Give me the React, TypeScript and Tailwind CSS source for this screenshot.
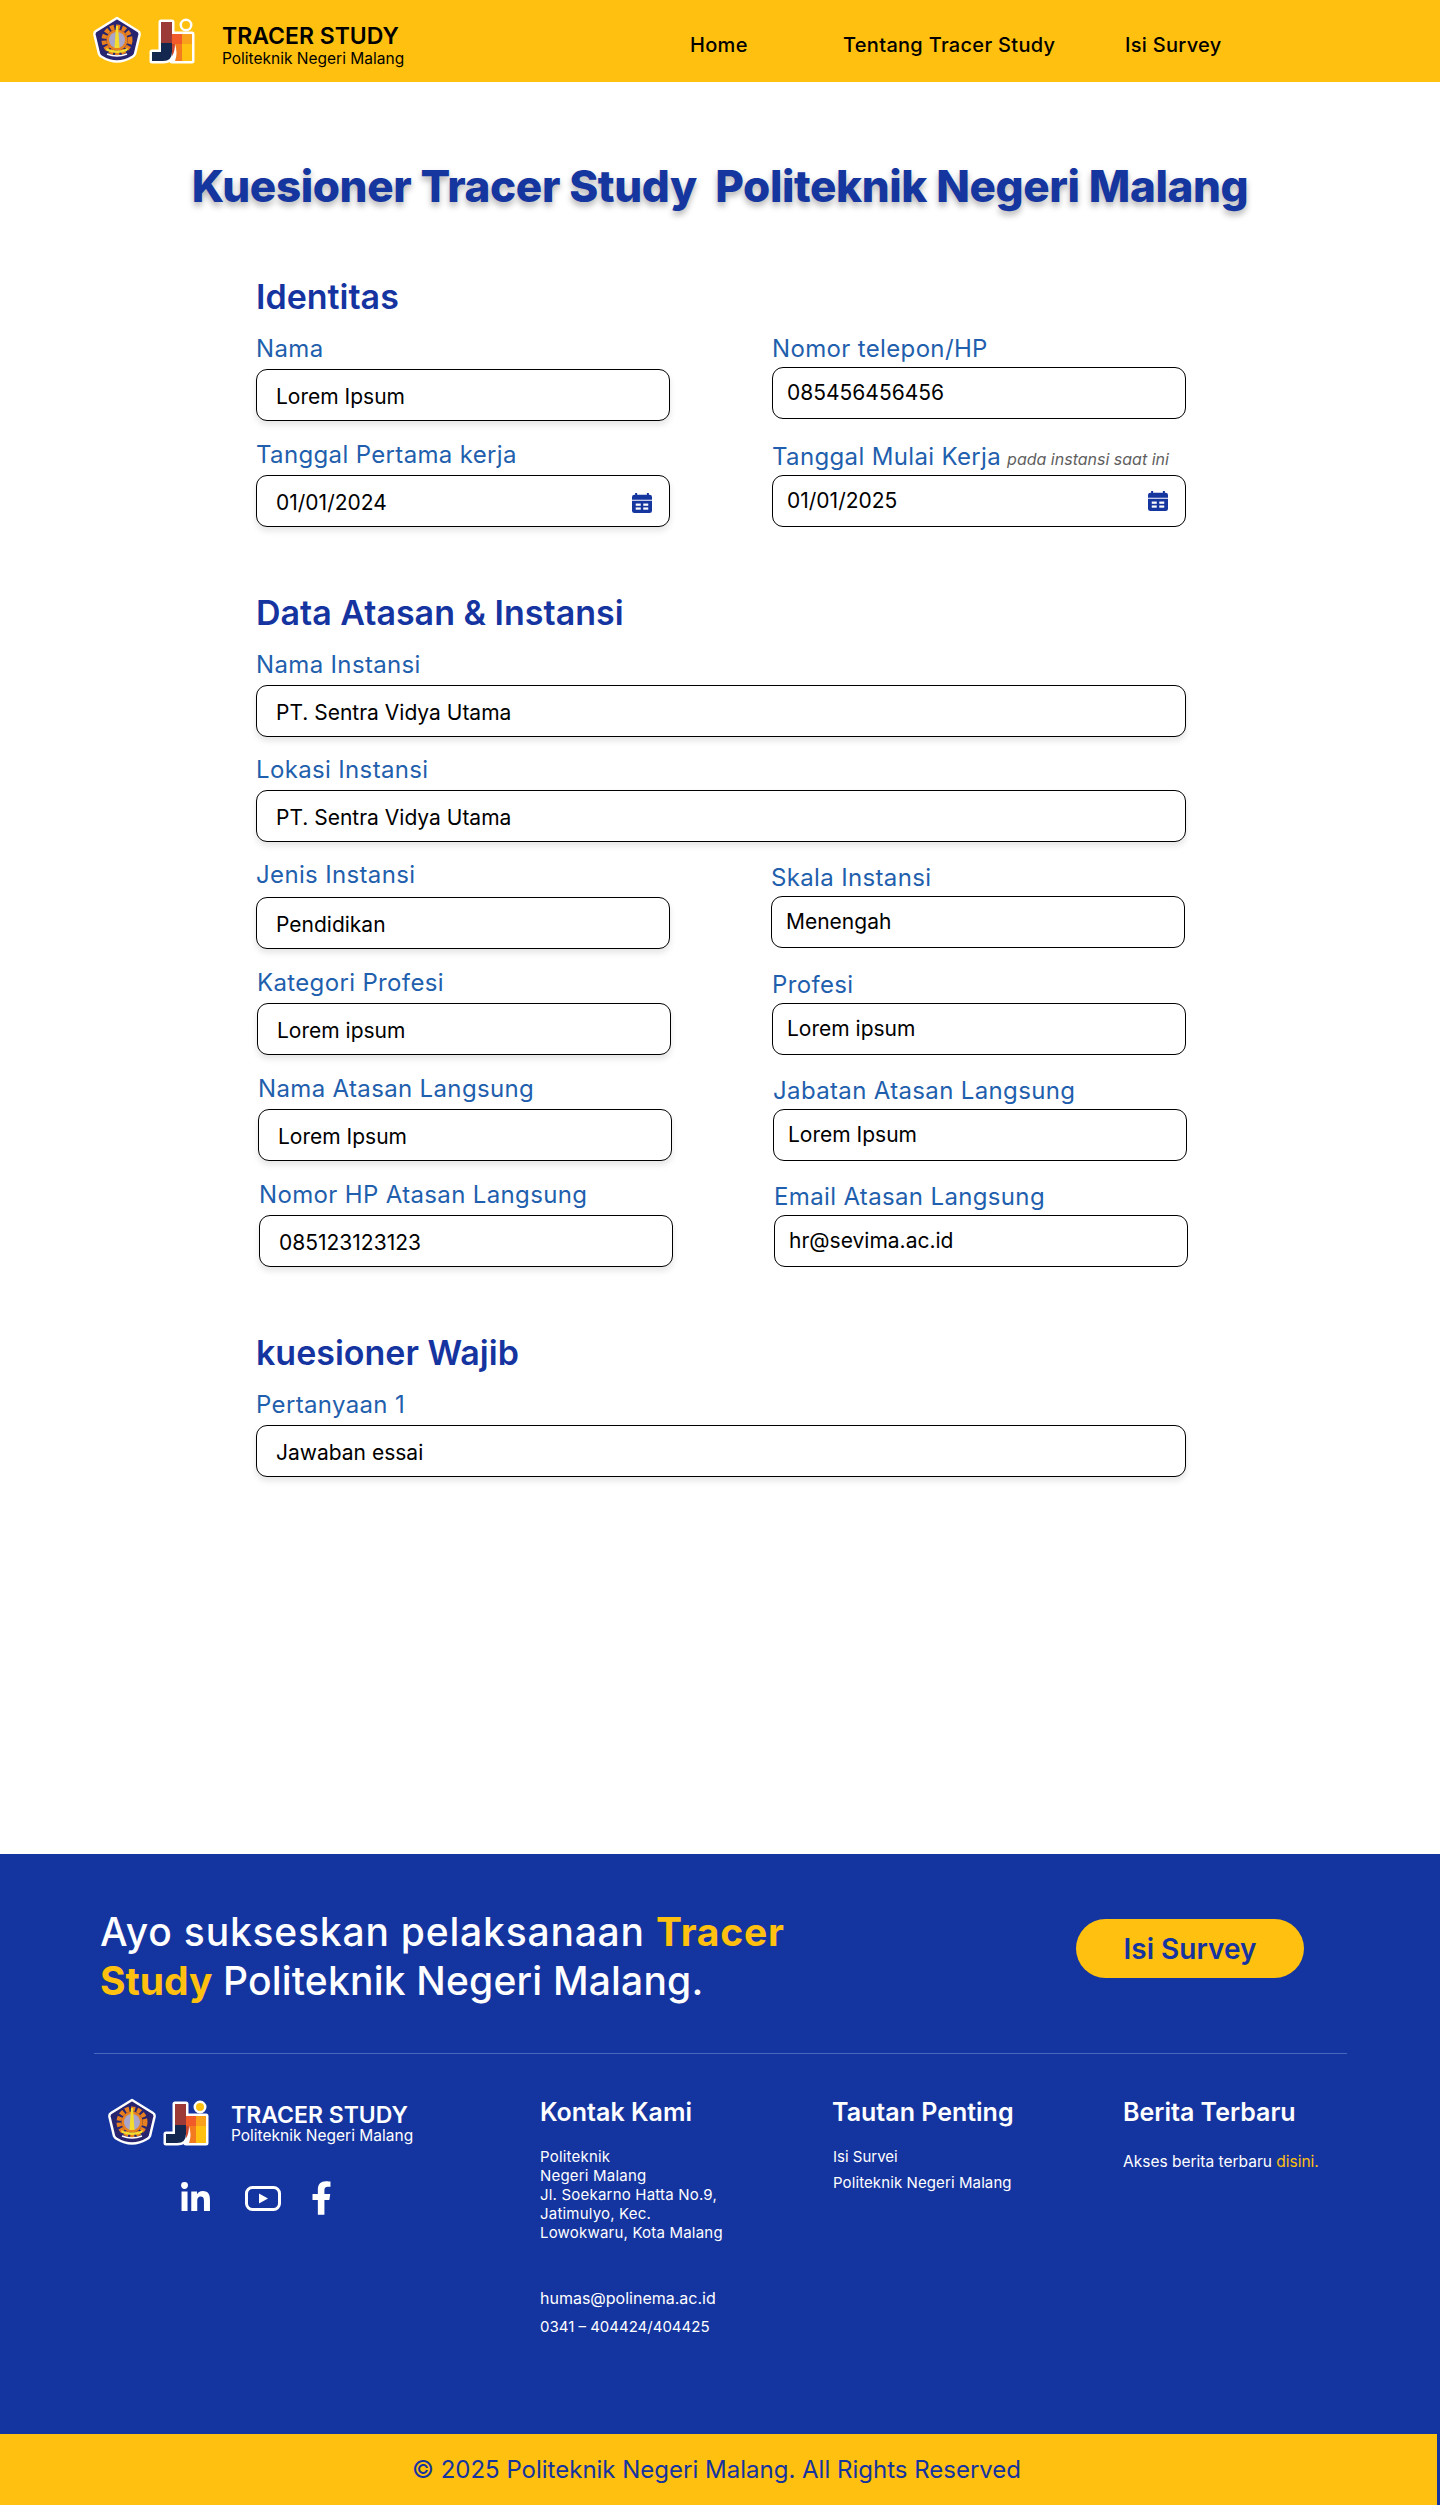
import { FaFacebookF, FaLinkedinIn } from 'react-icons/fa'

const BadgeLogo = () => (
  <svg viewBox="0 0 50 50" className="h-[50px] w-[50px] shrink-0">
    <path d="M25 2 L46 15 Q48 16 47.5 19 L43 38 Q42 40 40 41 Q25 50 10 41 Q8 40 7 38 L2.5 19 Q2 16 4 15 Z" fill="#28246f" stroke="#fff" strokeWidth="2.5" strokeLinejoin="round" />
    <circle cx="25" cy="24" r="13" fill="none" stroke="#e8801f" strokeWidth="5" strokeDasharray="4 2" />
    <circle cx="25" cy="24" r="10.5" fill="#e8801f" />
    <circle cx="25" cy="24" r="8" fill="#a9a6c9" />
    <path d="M24 10h2l1.5 22h-5z" fill="#f3dc2e" />
    <path d="M14 32q11 5 22 0l-1 3q-10 4-20 0z" fill="#f3dc2e" />
    <path d="M15 38q10 4 20 0" fill="none" stroke="#fff" strokeWidth="1.5" />
  </svg>
)

const JtiLogo = () => (
  <svg viewBox="0 0 48 46" className="h-[46px] w-[48px] shrink-0">
    <g fill="#fff" stroke="#fff" strokeWidth="5" strokeLinejoin="round">
      <path d="M12 4h11v30q0 9-9 9H3v-9h9z" />
      <rect x="23" y="16" width="20" height="27" />
      <circle cx="37" cy="7" r="4" />
    </g>
    <path d="M12 4h11v21H12z" fill="#9c3a38" />
    <path d="M12 25h11v9q0 9-9 9H3v-9h9z" fill="#14284f" />
    <path d="M23 25h3q0 9-3 13z" fill="#c9472f" />
    <rect x="23" y="16" width="10" height="10" fill="#f15a29" />
    <rect x="33" y="16" width="10" height="10" fill="#f9a11b" />
    <rect x="33" y="26" width="10" height="17" fill="#ffc010" />
    <path d="M26 26h7v17h-7q3-8 0-17z" fill="#f47a20" />
    <circle cx="37" cy="7" r="4" fill="#ffc010" />
  </svg>
)

const CalendarIcon = () => (
  <svg viewBox="2 0 16 18" className="h-[20px] w-[20px] text-[#15359f]" fill="currentColor" preserveAspectRatio="none">
    <rect x="4.5" y="0" width="1.6" height="3" />
    <rect x="13.9" y="0" width="1.6" height="3" />
    <path d="M2 3.5q0-2 2-2h12q2 0 2 2v2.5H2z" />
    <path d="M2 7h16v9q0 2-2 2H4q-2 0-2-2z" />
    <g fill="#fff">
      <rect x="5" y="9.5" width="4" height="2" />
      <rect x="11" y="9.5" width="4" height="2" />
      <rect x="5" y="13" width="4" height="2" />
      <rect x="11" y="13" width="4" height="2" />
    </g>
  </svg>
)

type FieldProps = {
  label: string
  value: string
  note?: string
  calendar?: boolean
  plain?: boolean
  className?: string
  inputClass?: string
}

const Field = ({ label, value, note, calendar, plain, className, inputClass }: FieldProps) => (
  <div className={className}>
    <div className="flex h-[28px] items-center whitespace-nowrap text-[24px] tracking-[0.35px] text-[#1f5fad]">
      {label}
      {note && <span className="ml-[6px] mt-[4px] text-[16px] italic tracking-normal text-[#5f5f5f]">{note}</span>}
    </div>
    <div
      className={`flex h-[52px] items-center justify-between rounded-[11px] border border-black bg-white pr-[17px] text-[21px] text-black ${
        plain ? 'mt-[4px] pl-[14px]' : 'mt-[6px] pl-[19px] pt-[3px] shadow-[0_4px_6px_rgba(0,0,0,0.1)]'
      } ${inputClass ?? ''}`}
    >
      <span>{value}</span>
      {calendar && <CalendarIcon />}
    </div>
  </div>
)

const Heading = ({ children, className }: { children: string; className?: string }) => (
  <h2 className={`flex h-[44px] items-center text-[34px] font-semibold text-[#15349f] ${className ?? ''}`}>{children}</h2>
)

export default function App() {
  return (
    <div className="relative min-h-[2505px] bg-white font-['Inter',sans-serif]">
      <header className="flex h-[82px] items-center bg-[#ffc010] pl-[92px]">
        <div className="flex w-[598px] items-center">
          <BadgeLogo />
          <div className="ml-[7px]"><JtiLogo /></div>
          <div className="ml-[25px] mt-[7px] text-black">
            <div className="text-[23px] font-semibold leading-[28px]">TRACER STUDY</div>
            <div className="text-[15.5px] leading-[18px]">Politeknik Negeri Malang</div>
          </div>
        </div>
        <nav className="flex pt-[8px] text-[20px] font-medium tracking-[0.3px] text-black">
          <a className="w-[153px]">Home</a>
          <a className="w-[282px]">Tentang Tracer Study</a>
          <a>Isi Survey</a>
        </nav>
      </header>

      <main className="h-[1772px]">
        <h1 className="flex h-[60px] translate-y-[74px] justify-center text-[44px] font-extrabold leading-[60px] tracking-[-0.4px] whitespace-pre text-[#15359f] [text-shadow:0_4px_6px_rgba(0,0,0,0.3)]">
          {'Kuesioner Tracer Study  Politeknik Negeri Malang'}
        </h1>

        <form className="ml-[256px] w-[930px] pt-[132px]">
          <Heading>Identitas</Heading>
          <div className="mt-[17px] grid grid-cols-[414px_414px] gap-x-[102px]">
            <Field label="Nama" value="Lorem Ipsum" />
            <Field label="Nomor telepon/HP" value="085456456456" plain />
            <Field label="Tanggal Pertama kerja" value="01/01/2024" calendar className="mt-[20px]" />
            <Field label="Tanggal Mulai Kerja" note="pada instansi saat ini" value="01/01/2025" calendar plain className="mt-[22px]" />
          </div>

          <Heading className="mt-[63px]">Data Atasan &amp; Instansi</Heading>
          <Field label="Nama Instansi" value="PT. Sentra Vidya Utama" className="mt-[17px]" />
          <Field label="Lokasi Instansi" value="PT. Sentra Vidya Utama" className="mt-[19px]" />

          <div className="grid grid-cols-[414px_414px] gap-x-[101px]">
            <Field label="Jenis Instansi" value="Pendidikan" className="mt-[19px]" inputClass="mt-[8px]" />
            <Field label="Skala Instansi" value="Menengah" plain className="mt-[22px]" />
          </div>
          <div className="ml-[1px] grid grid-cols-[414px_414px] gap-x-[101px]">
            <Field label="Kategori Profesi" value="Lorem ipsum" className="mt-[20px]" />
            <Field label="Profesi" value="Lorem ipsum" plain className="mt-[22px]" />
          </div>
          <div className="ml-[2px] grid grid-cols-[414px_414px] gap-x-[101px]">
            <Field label="Nama Atasan Langsung" value="Lorem Ipsum" className="mt-[20px]" />
            <Field label="Jabatan Atasan Langsung" value="Lorem Ipsum" plain className="mt-[22px]" />
          </div>
          <div className="ml-[3px] grid grid-cols-[414px_414px] gap-x-[101px]">
            <Field label="Nomor HP Atasan Langsung" value="085123123123" className="mt-[20px]" />
            <Field label="Email Atasan Langsung" value="hr@sevima.ac.id" plain className="mt-[22px]" />
          </div>

          <Heading className="mt-[63px]">kuesioner Wajib</Heading>
          <Field label="Pertanyaan 1" value="Jawaban essai" className="mt-[17px]" />
        </form>
      </main>

      <footer className="bg-[#14349f] text-white">
        <div className="flex h-[199px] pl-[100px] pt-[53px]">
          <p className="w-[800px] text-[39px] font-medium leading-[49px]">
            <span className="tracking-[0.8px]">
              Ayo sukseskan pelaksanaan <span className="font-bold text-[#ffc010]">Tracer</span>
            </span>
            <br />
            <span className="font-bold text-[#ffc010]">Study</span>{' '}
            <span className="tracking-[0.2px]">Politeknik Negeri Malang.</span>
          </p>
          <button className="ml-[176px] mt-[12px] h-[59px] w-[228px] rounded-full bg-[#ffc010] text-[28px] font-semibold text-[#15349f]">
            Isi Survey
          </button>
        </div>
        <div className="ml-[94px] h-px w-[1253px] bg-[#4a67bf]" />
        <div className="grid h-[380px] grid-cols-[433px_292px_291px_1fr] pl-[107px] pt-[44px]">
          <div>
            <div className="flex items-center">
              <BadgeLogo />
              <div className="ml-[6px]"><JtiLogo /></div>
              <div className="ml-[20px]">
                <div className="text-[23px] font-semibold leading-[26px]">TRACER STUDY</div>
                <div className="text-[15.5px] leading-[16px]">Politeknik Negeri Malang</div>
              </div>
            </div>
            <div className="ml-[72px] mt-[33px] flex items-center">
              <FaLinkedinIn className="h-[33px] w-[33px]" />
              <svg viewBox="0 0 36 25" className="ml-[33px] h-[25px] w-[36px]">
                <rect x="1.5" y="1.5" width="33" height="22" rx="6" fill="none" stroke="#fff" strokeWidth="3" />
                <path d="M14 7.5l9 5-9 5z" fill="#fff" />
              </svg>
              <FaFacebookF className="ml-[30px] h-[34px] w-[21px]" />
            </div>
          </div>
          <div>
            <h3 className="text-[25px] font-semibold leading-[28px]">Kontak Kami</h3>
            <p className="mt-[21px] text-[15px] leading-[19px] tracking-[0.2px]">
              Politeknik
              <br />
              Negeri Malang
              <br />
              Jl. Soekarno Hatta No.9,
              <br />
              Jatimulyo, Kec.
              <br />
              Lowokwaru, Kota Malang
            </p>
            <p className="mt-[47px] text-[16px] leading-[19px]">humas@polinema.ac.id</p>
            <p className="mt-[9px] text-[15px] leading-[19px]">0341 – 404424/404425</p>
          </div>
          <div>
            <h3 className="text-[25px] font-semibold leading-[28px]">Tautan Penting</h3>
            <p className="ml-[1px] mt-[21px] text-[15px] leading-[19px]">Isi Survei</p>
            <p className="ml-[1px] mt-[7px] text-[15px] leading-[19px] tracking-[0.1px]">Politeknik Negeri Malang</p>
          </div>
          <div>
            <h3 className="text-[25px] font-semibold leading-[28px]">Berita Terbaru</h3>
            <p className="mt-[26px] text-[15.5px] leading-[19px]">
              Akses berita terbaru <span className="text-[#ffc010]">disini.</span>
            </p>
          </div>
        </div>
        <div className="mr-[3px] flex h-[71px] items-center justify-center bg-[#ffc010] pr-[4px] text-[24px] text-[#15349f]">
          © 2025 Politeknik Negeri Malang. All Rights Reserved
        </div>
      </footer>
    </div>
  )
}
